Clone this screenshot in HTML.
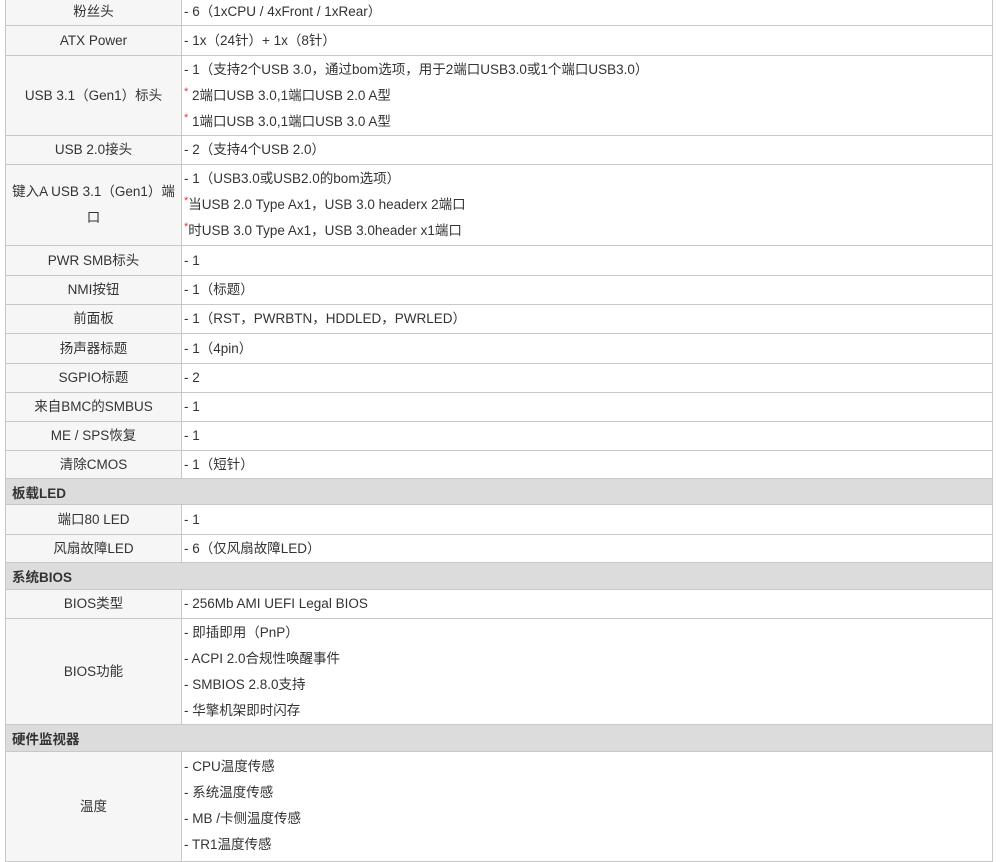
<!DOCTYPE html>
<html><head><meta charset="utf-8"><style>
body{margin:0;width:1000px;height:858px;overflow:hidden;background:#fff;font-family:"Liberation Sans","Noto Sans CJK SC",sans-serif;font-size:13.5px;color:#333;position:relative}
.r{position:absolute;left:5px;width:988px;border-left:1px solid #c8c8c8;border-right:1px solid #c8c8c8;border-bottom:1px solid #c8c8c8;box-sizing:border-box;display:flex}
.l{width:176px;background:#f6f6f6;border-right:1px solid #c8c8c8;display:flex;align-items:center;justify-content:center;text-align:center;line-height:26px;padding:0 4px;box-sizing:border-box}
.v{flex:1;display:flex;flex-direction:column;justify-content:center;padding-left:2px;line-height:26px}
.s{background:#dcdcdc;font-weight:bold;align-items:center;padding-left:6px}
.st{color:#e33;font-size:11px;vertical-align:top;line-height:18px}
</style></head><body>
<div class="r" style="top:-1px;height:27px"><div class="l">粉丝头</div><div class="v">- 6（1xCPU / 4xFront / 1xRear）</div></div>
<div class="r" style="top:26px;height:30px"><div class="l">ATX Power</div><div class="v">- 1x（24针）+ 1x（8针）</div></div>
<div class="r" style="top:56px;height:80px"><div class="l">USB 3.1（Gen1）标头</div><div class="v"><div>- 1（支持2个USB 3.0，通过bom选项，用于2端口USB3.0或1个端口USB3.0）</div><div><span class="st">*</span> 2端口USB 3.0,1端口USB 2.0 A型</div><div><span class="st">*</span> 1端口USB 3.0,1端口USB 3.0 A型</div></div></div>
<div class="r" style="top:136px;height:29px"><div class="l">USB 2.0接头</div><div class="v">- 2（支持4个USB 2.0）</div></div>
<div class="r" style="top:165px;height:81px"><div class="l">键入A USB 3.1（Gen1）端口</div><div class="v"><div>- 1（USB3.0或USB2.0的bom选项）</div><div><span class="st">*</span>当USB 2.0 Type Ax1，USB 3.0 headerx 2端口</div><div><span class="st">*</span>时USB 3.0 Type Ax1，USB 3.0header x1端口</div></div></div>
<div class="r" style="top:246px;height:30px"><div class="l">PWR SMB标头</div><div class="v">- 1</div></div>
<div class="r" style="top:276px;height:29px"><div class="l">NMI按钮</div><div class="v">- 1（标题）</div></div>
<div class="r" style="top:305px;height:29px"><div class="l">前面板</div><div class="v">- 1（RST，PWRBTN，HDDLED，PWRLED）</div></div>
<div class="r" style="top:334px;height:30px"><div class="l">扬声器标题</div><div class="v">- 1（4pin）</div></div>
<div class="r" style="top:364px;height:29px"><div class="l">SGPIO标题</div><div class="v">- 2</div></div>
<div class="r" style="top:393px;height:29px"><div class="l">来自BMC的SMBUS</div><div class="v">- 1</div></div>
<div class="r" style="top:422px;height:29px"><div class="l">ME / SPS恢复</div><div class="v">- 1</div></div>
<div class="r" style="top:451px;height:28px"><div class="l">清除CMOS</div><div class="v">- 1（短针）</div></div>
<div class="r s" style="top:479px;height:26px">板载LED</div>
<div class="r" style="top:505px;height:30px"><div class="l">端口80 LED</div><div class="v">- 1</div></div>
<div class="r" style="top:535px;height:28px"><div class="l">风扇故障LED</div><div class="v">- 6（仅风扇故障LED）</div></div>
<div class="r s" style="top:563px;height:27px">系统BIOS</div>
<div class="r" style="top:590px;height:29px"><div class="l">BIOS类型</div><div class="v">- 256Mb AMI UEFI Legal BIOS</div></div>
<div class="r" style="top:619px;height:106px"><div class="l">BIOS功能</div><div class="v"><div>- 即插即用（PnP）</div><div>- ACPI 2.0合规性唤醒事件</div><div>- SMBIOS 2.8.0支持</div><div>- 华擎机架即时闪存</div></div></div>
<div class="r s" style="top:725px;height:27px">硬件监视器</div>
<div class="r" style="top:752px;height:110px"><div class="l">温度</div><div class="v" style="justify-content:flex-start;padding-top:2px"><div>- CPU温度传感</div><div>- 系统温度传感</div><div>- MB /卡侧温度传感</div><div>- TR1温度传感</div></div></div>
</body></html>
